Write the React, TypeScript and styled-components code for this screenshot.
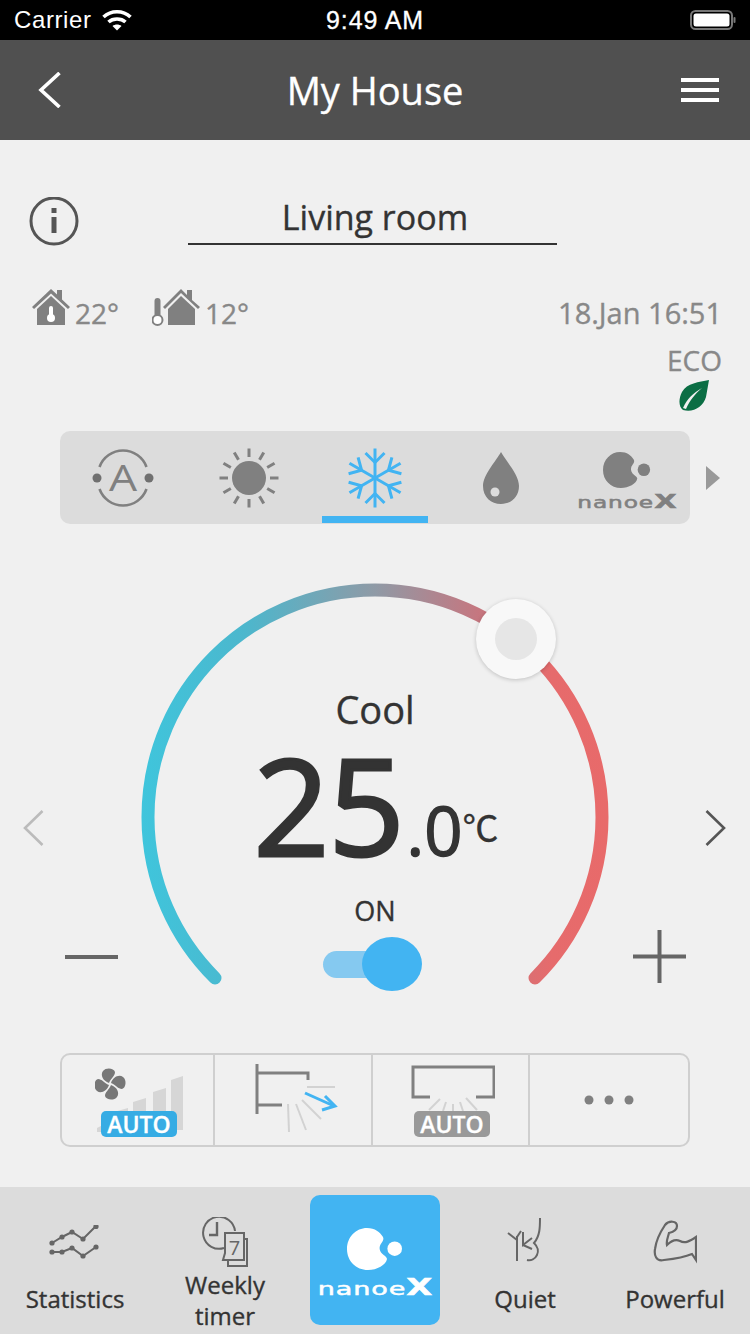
import React from 'react';
import styled, { createGlobalStyle } from 'styled-components';

const BLUE = '#42b4f2';
const ICON = '#808080';

const GlobalStyle = createGlobalStyle`
  html, body {
    margin: 0;
    padding: 0;
    overflow: hidden;
    background: #f0f0f0;
    font-family: 'Open Sans', 'Noto Sans', sans-serif;
  }
  svg text {
    -webkit-text-stroke: 0;
  }
`;

const Page = styled.div`
  width: 750px;
  height: 1334px;
  display: flex;
  flex-direction: column;
  background: #f0f0f0;
  color: #333;
  -webkit-text-stroke: 0.35px currentColor;
`;

const StatusBar = styled.div`
  height: 40px;
  flex: none;
  background: #000;
  color: #fff;
  display: grid;
  grid-template-columns: 1fr auto 1fr;
  align-items: center;
  padding: 0 14px;
  font-family: 'Liberation Sans', sans-serif;
  font-size: 24px;
  -webkit-text-stroke: 0;
`;

const Carrier = styled.div`
  display: flex;
  align-items: center;
  gap: 10px;
  letter-spacing: 0.6px;
`;

const Clock = styled.div`
  font-size: 25px;
  letter-spacing: 0.9px;
  -webkit-text-stroke: 0.3px #fff;
`;

const Battery = styled.div`
  justify-self: end;
  display: flex;
`;

const Header = styled.header`
  height: 100px;
  flex: none;
  background: #505050;
  color: #fff;
  display: grid;
  grid-template-columns: 1fr auto 1fr;
  align-items: center;
  padding: 0 31px;
`;

const BackArrow = styled.svg`
  margin-left: 7px;
`;

const HeaderTitle = styled.h1`
  margin: 0;
  font-size: 38px;
  font-weight: 400;
  line-height: 48px;
`;

const Burger = styled.div`
  justify-self: end;
  width: 38px;
  display: flex;
  flex-direction: column;
  gap: 6px;
  span {
    display: block;
    height: 4px;
    background: #fff;
  }
`;

const Main = styled.main`
  flex: 1;
  display: flex;
  flex-direction: column;
`;

const TitleRow = styled.div`
  margin-top: 57px;
  height: 48px;
  display: grid;
  grid-template-columns: 159px 369px 1fr;
  align-items: start;
  padding-left: 29px;
`;

const RoomName = styled.div`
  height: 46px;
  border-bottom: 2px solid #333;
  padding-left: 5px;
  text-align: center;
  font-size: 34px;
  line-height: 40px;
`;

const InfoBlock = styled.div`
  height: 186px;
  box-sizing: border-box;
  padding: 44px 28px 0 32px;
  display: flex;
  justify-content: space-between;
  align-items: flex-start;
  color: #888;
`;

const Temps = styled.div`
  display: flex;
  gap: 33px;
`;

const Temp = styled.div`
  display: flex;
  align-items: flex-start;
  gap: 5px;
  font-size: 28px;
  line-height: 48px;
`;

const Stamp = styled.div`
  display: flex;
  flex-direction: column;
  align-items: flex-end;
  padding-top: 5px;
  font-size: 29px;
  line-height: 38px;
`;

const Eco = styled.div`
  margin-top: 10px;
  font-size: 28px;
  line-height: 36px;
`;

const Leaf = styled.svg`
  margin: 2px 13px 0 0;
`;

const ModeRow = styled.div`
  display: flex;
  align-items: center;
  padding-left: 60px;
  gap: 16px;
`;

const ModeBar = styled.div`
  width: 630px;
  height: 93px;
  border-radius: 10px;
  background: #dcdcdc;
  display: flex;
  overflow: hidden;
`;

const Mode = styled.div<{ $active?: boolean }>`
  width: 126px;
  height: 93px;
  display: flex;
  flex-direction: column;
  align-items: center;
  justify-content: center;
  position: relative;
  &::after {
    content: '';
    display: ${({ $active }) => ($active ? 'block' : 'none')};
    position: absolute;
    left: 10px;
    right: 10px;
    bottom: 1px;
    height: 7px;
    background: ${BLUE};
  }
`;

const NanoBox = styled.div<{ $light?: boolean }>`
  display: flex;
  flex-direction: column;
  align-items: center;
  padding-top: ${({ $light }) => ($light ? '7px' : '8px')};
  gap: ${({ $light }) => ($light ? '8px' : '6px')};
  color: ${({ $light }) => ($light ? '#fff' : '#808080')};
`;

const Wordmark = styled.div<{ $large?: boolean }>`
  font-family: 'DejaVu Sans', sans-serif;
  font-weight: 400;
  -webkit-text-stroke: 0.5px currentColor;
  font-size: ${({ $large }) => ($large ? '18px' : '15px')};
  line-height: ${({ $large }) => ($large ? '20px' : '16px')};
  letter-spacing: 0.6px;
  transform: scaleX(${({ $large }) => ($large ? 1.5 : 1.55)});
  white-space: nowrap;
  b {
    font-size: 1.25em;
    line-height: 0.8;
    font-weight: 700;
  }
`;

const Stage = styled.div`
  position: relative;
  height: 529px;
  display: grid;
  > * {
    grid-area: 1 / 1;
  }
`;

const Readout = styled.div`
  display: flex;
  flex-direction: column;
  align-items: center;
  padding-top: 161px;
`;

const ModeName = styled.div`
  font-size: 38px;
  line-height: 48px;
`;

const Reading = styled.div`
  height: 150px;
  margin-top: -3px;
  display: flex;
  align-items: baseline;
  white-space: nowrap;
  line-height: 150px;
  padding-left: 2px;
`;

const Whole = styled.span`
  font-size: 133px;
  letter-spacing: -1px;
  -webkit-text-stroke: 3px currentColor;
`;

const Fraction = styled.span`
  font-size: 67px;
  margin-left: 3px;
  -webkit-text-stroke: 1.4px currentColor;
`;

const Unit = styled.span`
  font-size: 36px;
  font-family: 'Noto Sans CJK JP', sans-serif;
  align-self: flex-start;
  margin: 56px 0 0 0;
  line-height: 80px;
`;

const PowerLabel = styled.div`
  margin-top: 13px;
  font-size: 27px;
  line-height: 36px;
`;

const Toggle = styled.div`
  margin: 8px 6px 0 0;
  width: 99px;
  height: 54px;
  display: flex;
  align-items: center;
  position: relative;
`;

const Track = styled.div`
  width: 80px;
  height: 27px;
  border-radius: 14px;
  background: #85c9f0;
`;

const Knob = styled.div`
  position: absolute;
  right: 0;
  top: 0;
  width: 60px;
  height: 54px;
  border-radius: 50%;
  background: ${BLUE};
`;

const Thumb = styled.div`
  position: absolute;
  left: 476px;
  top: 75px;
  width: 80px;
  height: 80px;
  box-sizing: border-box;
  border-radius: 50%;
  background: #f8f8f8;
  box-shadow: 0 1px 4px rgba(0, 0, 0, 0.2);
  display: flex;
  align-items: center;
  justify-content: center;
  &::after {
    content: '';
    width: 42px;
    height: 42px;
    border-radius: 50%;
    background: #e6e6e6;
  }
`;

const PagerLayer = styled.div`
  display: flex;
  justify-content: space-between;
  align-items: flex-start;
  padding: 286px 24px 0 23px;
  pointer-events: none;
`;

const StepLayer = styled.div`
  display: flex;
  justify-content: space-between;
  align-items: center;
  align-self: start;
  height: 53px;
  margin-top: 406px;
  padding: 0 64px 0 65px;
`;

const Minus = styled.div`
  width: 53px;
  height: 4px;
  background: #666;
`;

const SettingsRow = styled.div`
  margin: 0 60px;
  height: 94px;
  box-sizing: border-box;
  border: 2px solid #cfcfcf;
  border-radius: 10px;
  display: grid;
  grid-template-columns: 151px 158px 157px 1fr;
`;

const SettingCell = styled.div`
  position: relative;
  display: flex;
  align-items: center;
  justify-content: center;
  & + & {
    border-left: 2px solid #cfcfcf;
  }
`;

const AutoBadge = styled.span<{ $on?: boolean }>`
  position: absolute;
  left: calc(50% + 1.5px);
  bottom: 8px;
  transform: translateX(-50%);
  width: 76px;
  height: 26px;
  border-radius: 5px;
  background: ${({ $on }) => ($on ? '#36ace4' : '#999')};
  color: #fff;
  font-size: 23px;
  font-weight: 600;
  line-height: 26px;
  text-align: center;
`;

const TabBar = styled.nav`
  height: 147px;
  flex: none;
  background: #dcdcdc;
  display: flex;
`;

const Tab = styled.div`
  width: 150px;
  display: flex;
  flex-direction: column;
  align-items: center;
  color: #333;
`;

const TabIcon = styled.div`
  height: 80px;
  display: flex;
  align-items: flex-end;
  justify-content: center;
`;

const TabLabel = styled.div<{ $tight?: boolean }>`
  margin-top: ${({ $tight }) => ($tight ? '2px' : '16px')};
  font-size: 24px;
  line-height: 31px;
  text-align: center;
`;

const NanoTile = styled.div`
  width: 130px;
  height: 130px;
  margin: 8px 10px 0;
  flex: none;
  border-radius: 10px;
  background: ${BLUE};
  display: flex;
  align-items: center;
  justify-content: center;
`;

const Wifi = () => (
  <svg width="30" height="22" viewBox="0 0 30 22" fill="none" stroke="#fff" strokeWidth="3.6">
    <path d="M1.5 8 C9 1 21 1 28.5 8" />
    <path d="M6.5 13 C11 9 19 9 23.5 13" />
    <path d="M15 21.5 L10.5 17 C13 15 17 15 19.5 17 Z" fill="#fff" stroke="none" />
  </svg>
);

const BatteryIcon = () => (
  <svg width="46" height="20" viewBox="0 0 46 20">
    <rect x="1" y="1" width="41" height="18" rx="4.5" fill="none" stroke="#777" strokeWidth="2" />
    <rect x="3.5" y="3.5" width="36" height="13" rx="2.5" fill="#fff" />
    <rect x="43.5" y="7" width="2" height="6" rx="1" fill="#777" />
  </svg>
);

const InfoIcon = () => (
  <svg width="50" height="50" viewBox="0 0 50 50">
    <circle cx="25" cy="24" r="23" fill="none" stroke="#555" strokeWidth="3" />
    <rect x="22.5" y="11" width="5" height="5" fill="#555" />
    <rect x="22.5" y="20" width="5" height="16" fill="#555" />
  </svg>
);

const House = () => (
  <svg width="38" height="37" viewBox="0 0 38 37">
    <path d="M0 18 L19 0 L25 5.5 V1 H30 V10.5 L38 18 L36 20 L19 4.5 L2 20 Z" fill={ICON} />
    <path d="M5 20 L19 7 L33 20 V36 H5 Z" fill={ICON} />
    <rect x="17" y="17" width="4" height="12" rx="2" fill="#fff" />
    <circle cx="19" cy="29" r="4" fill="#fff" />
  </svg>
);

const ThermoHouse = () => (
  <svg width="48" height="37" viewBox="0 0 48 37">
    <rect x="2.5" y="9" width="6" height="20" rx="3" fill={ICON} />
    <circle cx="5.5" cy="31" r="5" fill="#fff" stroke={ICON} strokeWidth="2" />
    <path d="M11 18 L29 0 L35 6 V1 H40 V11 L48 18 L46 20 L29 4 L13 20 Z" fill={ICON} />
    <path d="M16 20 L29 7 L43 20 V36 H16 Z" fill={ICON} />
  </svg>
);

const AutoMode = () => (
  <svg width="64" height="64" viewBox="0 0 64 64" fill="none" stroke={ICON} strokeWidth="2.6">
    <path d="M8.5 21 A25 25 0 0 1 55.5 21" />
    <path d="M8.5 43 A25 25 0 0 0 55.5 43" />
    <circle cx="6" cy="32" r="4.5" fill="#707070" stroke="none" />
    <circle cx="58" cy="32" r="4.5" fill="#707070" stroke="none" />
    <text
      transform="translate(32 45) scale(1.2 1)"
      textAnchor="middle"
      fontSize="37"
      fontFamily="Open Sans"
      fill={ICON}
      stroke="none"
    >
      A
    </text>
  </svg>
);

const rayAngles = [0, 30, 60, 90, 120, 150, 180, 210, 240, 270, 300, 330];

const Sun = () => (
  <svg width="60" height="60" viewBox="-30 -30 60 60">
    <circle r="17" fill={ICON} />
    {rayAngles.map((a) => (
      <line key={a} x1="0" y1="-21" x2="0" y2="-29.5" stroke={ICON} strokeWidth="3" transform={`rotate(${a})`} />
    ))}
  </svg>
);

const armAngles = [0, 60, 120, 180, 240, 300];

const Snowflake = () => (
  <svg width="60" height="60" viewBox="-30 -30 60 60" fill="none" stroke={BLUE} strokeWidth="3">
    {armAngles.map((a) => (
      <g key={a} transform={`rotate(${a})`}>
        <line x1="0" y1="0" x2="0" y2="-29.5" />
        <path d="M-9.5 -25 L0 -15.5 L9.5 -25" />
      </g>
    ))}
  </svg>
);

const Drop = () => (
  <svg width="38" height="54" viewBox="0 0 38 54">
    <path d="M19 1 C24 10 37 24 37 35 C37 46 29 53 19 53 C9 53 1 46 1 35 C1 24 14 10 19 1 Z" fill={ICON} />
    <circle cx="13" cy="41" r="4.5" fill="#dcdcdc" />
  </svg>
);

const NanoMark = ({ width }: { width: number }) => (
  <svg width={width} height={(width * 42) / 56} viewBox="0 0 56 42" fill="currentColor">
    <path d="M20 0 C28 0 33 4 36 9 C37 11 36 13 34.5 15 C32 18 32 22 34.5 25 C36.5 27.5 39.5 28 40 31 C39 37 30 42 21 42 C9 42 0 33 0 21 C0 9 9 0 20 0 Z" />
    <circle cx="47.7" cy="20.7" r="7.3" />
  </svg>
);

const EcoLeaf = () => (
  <Leaf width="30" height="31" viewBox="0 0 30 31">
    <path d="M30 0 C20 2 8 3 3 12 C-1 20 0 27 4 30 C14 33 24 27 27 17 C28 11 29 6 30 0 Z" fill="#0b6e44" />
    <path d="M4 28 C8 19 14 13 23 8 C16 14 11 20 7 29 Z" fill="#f0f0f0" />
  </Leaf>
);

const Arc = () => (
  <svg width="750" height="529" viewBox="0 0 750 529">
    <defs>
      <linearGradient id="dial" gradientUnits="userSpaceOnUse" x1="142" y1="0" x2="608" y2="0">
        <stop offset="0" stopColor="#3fc5dc" />
        <stop offset="0.22" stopColor="#4cb7cd" />
        <stop offset="0.5" stopColor="#8f9aa6" />
        <stop offset="0.72" stopColor="#c57780" />
        <stop offset="0.88" stopColor="#e66b6c" />
        <stop offset="1" stopColor="#e86a6a" />
      </linearGradient>
    </defs>
    <path d="M215 454 A227 227 0 1 1 535 454" fill="none" stroke="url(#dial)" strokeWidth="13" strokeLinecap="round" />
  </svg>
);

const Chevron = ({ dir, color }: { dir: 'left' | 'right'; color: string }) => (
  <svg width="21" height="36" viewBox="0 0 21 36" fill="none" stroke={color} strokeWidth="2.6">
    <path d={dir === 'left' ? 'M19.5 1 L2 18 L19.5 35' : 'M1.5 1 L19 18 L1.5 35'} />
  </svg>
);

const Plus = () => (
  <svg width="53" height="53" viewBox="0 0 53 53" stroke="#666" strokeWidth="4">
    <line x1="0" y1="26.5" x2="53" y2="26.5" />
    <line x1="26.5" y1="0" x2="26.5" y2="53" />
  </svg>
);

const FanIcon = () => (
  <svg width="92" height="76" viewBox="0 0 92 76" style={{ marginTop: -4, marginLeft: 6 }}>
    <g fill="#d6d6d6">
      <path d="M2 68 L14 62 V72 H2 Z" />
      <path d="M19 52 L33 48 V70 H19 Z" />
      <path d="M38 42 L51 38 V70 H38 Z" />
      <path d="M58 32 L71 28 V70 H58 Z" />
      <path d="M76 20 L88 16 V70 H76 Z" />
    </g>
    <g fill="#777" transform="translate(15 24)">
      <path d="M-1 -1 C-7 -3 -10 -9 -7 -13 C-4 -17 4 -16 5 -12 C5 -8 1 -6 -1 -1 Z" />
      <path d="M1 -1 C3 -7 9 -10 13 -7 C17 -4 16 4 12 5 C8 5 6 1 1 -1 Z" />
      <path d="M1 1 C7 3 10 9 7 13 C4 17 -4 16 -5 12 C-5 8 -1 6 1 1 Z" />
      <path d="M-1 1 C-3 7 -9 10 -13 7 C-17 4 -16 -4 -12 -5 C-8 -5 -6 -1 -1 1 Z" />
    </g>
  </svg>
);

const SwingIcon = () => (
  <svg width="84" height="74" viewBox="0 0 84 74" fill="none" style={{ marginTop: 1, marginLeft: 8 }}>
    <g stroke={ICON} strokeWidth="3">
      <path d="M2 0 V50" />
      <path d="M2 9 H53 V16" />
      <path d="M2 41 H27" />
    </g>
    <g stroke="#d2d2d2" strokeWidth="2">
      <path d="M52 23 H80" />
      <path d="M33 40 L34 68" />
      <path d="M41 40 L51 66" />
      <path d="M47 36 L66 55" />
    </g>
    <g stroke={BLUE} strokeWidth="3">
      <path d="M50 29 L79 42" />
      <path d="M70 32 L80 42 L67 46" />
    </g>
  </svg>
);

const VaneIcon = () => (
  <svg width="84" height="62" viewBox="0 0 84 62" fill="none" style={{ marginTop: -8, marginLeft: 4 }}>
    <path d="M19 32 H2 V2 H83 V32 H65" stroke={ICON} strokeWidth="3" />
    <g stroke="#d2d2d2" strokeWidth="2">
      <path d="M29 34 L18 45" />
      <path d="M35 37 L32 46" />
      <path d="M42 39 V46" />
      <path d="M49 37 L52 46" />
      <path d="M55 33 L66 45" />
    </g>
  </svg>
);

const MoreDots = () => (
  <svg width="50" height="10" viewBox="0 0 50 10" fill={ICON}>
    <circle cx="5" cy="5" r="4.5" />
    <circle cx="25" cy="5" r="4.5" />
    <circle cx="45" cy="5" r="4.5" />
  </svg>
);

const StatsIcon = () => (
  <svg width="52" height="42" viewBox="0 0 52 42" fill="none" stroke="#666" strokeWidth="2">
    <path d="M3 18 L13 12 L23 7 L34 14 L47 1" />
    <path d="M3 27 L13 27 L23 23 L34 31 L47 22" />
    <g fill="#666" stroke="none">
      {[
        [3, 18],
        [13, 12],
        [23, 7],
        [34, 14],
        [47, 1.5],
        [3, 27],
        [13, 27],
        [23, 23],
        [34, 31],
        [47, 22],
      ].map(([x, y]) => (
        <circle key={`${x}-${y}`} cx={x} cy={y} r="2.6" />
      ))}
    </g>
  </svg>
);

const TimerIcon = () => (
  <svg width="48" height="50" viewBox="0 0 48 50" fill="none" stroke="#666" strokeWidth="2">
    <path d="M23 31 A16 16 0 1 1 34 14" />
    <path d="M16 5 V18 H8" strokeWidth="2.4" />
    <path d="M44 22 H46 V49 H27 V44" />
    <path d="M24 16 H43 V43 H22 L24 36 Z" fill="#dcdcdc" />
    <text x="33.5" y="38" textAnchor="middle" fontSize="20" fontFamily="Open Sans" fill="#666" stroke="none">
      7
    </text>
  </svg>
);

const QuietIcon = () => (
  <svg width="38" height="50" viewBox="0 0 38 50" fill="none" stroke="#666" strokeWidth="2">
    <path d="M34 1 C34 10 34 19 28 26 C32 30 33 33 31 38 C29 42 25 44 21 43" />
    <path d="M11 44 V19" />
    <path d="M2 16 L11 23" />
    <path d="M15 14 L11 20" />
    <path d="M17 15 V28 L26 21" />
    <path d="M17 28 L26 32" />
  </svg>
);

const PowerIcon = () => (
  <svg width="44" height="47" viewBox="0 0 44 47" fill="none" stroke="#666" strokeWidth="2.2">
    <path d="M11 40 C3 42 1 35 2 29 C3 21 8 11 12 5 C16 0 24 1 24 6 C24 10 20 12 16 13 C15 17 13 21 14 25 C18 21 23 19 27 21 C32 24 37 21 43 17 V40 L39 34 C32 37 20 39 11 40 Z" />
  </svg>
);

const App = () => (
  <Page>
    <GlobalStyle />
    <StatusBar>
      <Carrier>
        Carrier
        <Wifi />
      </Carrier>
      <Clock>9:49 AM</Clock>
      <Battery>
        <BatteryIcon />
      </Battery>
    </StatusBar>
    <Header>
      <BackArrow width="24" height="36" viewBox="0 0 24 36" fill="none" stroke="#fff" strokeWidth="3.6">
        <path d="M21.5 1 L3 18 L21.5 35" />
      </BackArrow>
      <HeaderTitle>My House</HeaderTitle>
      <Burger>
        <span />
        <span />
        <span />
      </Burger>
    </Header>
    <Main>
      <TitleRow>
        <InfoIcon />
        <RoomName>Living room</RoomName>
      </TitleRow>
      <InfoBlock>
        <Temps>
          <Temp>
            <House />
            22°
          </Temp>
          <Temp>
            <ThermoHouse />
            12°
          </Temp>
        </Temps>
        <Stamp>
          18.Jan 16:51
          <Eco>ECO</Eco>
          <EcoLeaf />
        </Stamp>
      </InfoBlock>
      <ModeRow>
        <ModeBar>
          <Mode>
            <AutoMode />
          </Mode>
          <Mode>
            <Sun />
          </Mode>
          <Mode $active>
            <Snowflake />
          </Mode>
          <Mode>
            <Drop />
          </Mode>
          <Mode>
            <NanoBox>
              <NanoMark width={48} />
              <Wordmark>
                nanoe<b>X</b>
              </Wordmark>
            </NanoBox>
          </Mode>
        </ModeBar>
        <svg width="14" height="24" viewBox="0 0 14 24">
          <path d="M0 0 L14 12 L0 24 Z" fill="#999" />
        </svg>
      </ModeRow>
      <Stage>
        <Arc />
        <PagerLayer>
          <Chevron dir="left" color="#bbb" />
          <Chevron dir="right" color="#555" />
        </PagerLayer>
        <StepLayer>
          <Minus />
          <Plus />
        </StepLayer>
        <Readout>
          <ModeName>Cool</ModeName>
          <Reading>
            <Whole>25</Whole>
            <Fraction>.0</Fraction>
            <Unit>℃</Unit>
          </Reading>
          <PowerLabel>ON</PowerLabel>
          <Toggle>
            <Track />
            <Knob />
          </Toggle>
        </Readout>
        <Thumb />
      </Stage>
      <SettingsRow>
        <SettingCell>
          <FanIcon />
          <AutoBadge $on>AUTO</AutoBadge>
        </SettingCell>
        <SettingCell>
          <SwingIcon />
        </SettingCell>
        <SettingCell>
          <VaneIcon />
          <AutoBadge>AUTO</AutoBadge>
        </SettingCell>
        <SettingCell>
          <MoreDots />
        </SettingCell>
      </SettingsRow>
    </Main>
    <TabBar>
      <Tab>
        <TabIcon>
          <StatsIcon />
        </TabIcon>
        <TabLabel>Statistics</TabLabel>
      </Tab>
      <Tab>
        <TabIcon>
          <TimerIcon />
        </TabIcon>
        <TabLabel $tight>
          Weekly
          <br />
          timer
        </TabLabel>
      </Tab>
      <NanoTile>
        <NanoBox $light>
          <NanoMark width={56} />
          <Wordmark $large>
            nanoe<b>X</b>
          </Wordmark>
        </NanoBox>
      </NanoTile>
      <Tab>
        <TabIcon>
          <QuietIcon />
        </TabIcon>
        <TabLabel>Quiet</TabLabel>
      </Tab>
      <Tab>
        <TabIcon>
          <PowerIcon />
        </TabIcon>
        <TabLabel>Powerful</TabLabel>
      </Tab>
    </TabBar>
  </Page>
);

export default App;
